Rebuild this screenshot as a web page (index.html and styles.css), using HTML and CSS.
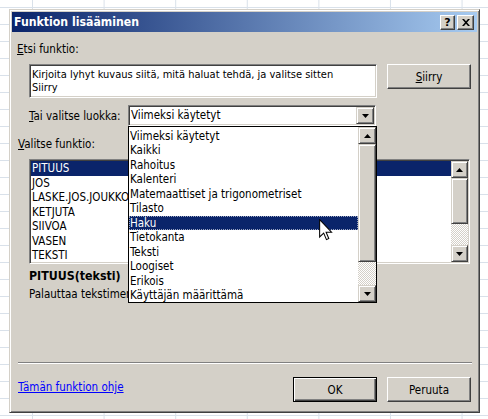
FILE: index.html
```html
<!DOCTYPE html>
<html lang="fi">
<head>
<meta charset="utf-8">
<title>Funktion lisääminen</title>
<link rel="stylesheet" href="styles.css">
</head>
<body>
<div class="dialog">
  <div class="titlebar">
    <span class="title">Funktion lisääminen</span>
    <span class="tbtn help">?</span>
    <span class="tbtn close"><svg width="8" height="7" viewBox="0 0 8 7"><path d="M0 0h2l2 2.2 2-2.2h2l-3 3.5 3 3.5h-2l-2-2.2-2 2.2h-2l3-3.5z" fill="#000"/></svg></span>
  </div>
  <div class="content">
    <div class="lbl lbl-etsi"><u>E</u>tsi funktio:</div>
    <div class="search-row">
      <div class="sunken textarea">Kirjoita lyhyt kuvaus siitä, mitä haluat tehdä, ja valitse sitten<br>Siirry</div>
      <button class="btn siirry"><u>S</u>iirry</button>
    </div>
    <div class="cat-row">
      <span class="lbl"><u>T</u>ai valitse luokka:</span>
      <div class="sunken combo">
        <div class="combo-field">Viimeksi käytetyt</div>
        <div class="sbtn combo-arrow"><svg width="7" height="4" viewBox="0 0 7 4"><path d="M0 0h7l-3.5 4z" fill="#000"/></svg></div>
        <div class="popup">
          <div class="pitems">
            <div class="item">Viimeksi käytetyt</div>
            <div class="item">Kaikki</div>
            <div class="item">Rahoitus</div>
            <div class="item">Kalenteri</div>
            <div class="item">Matemaattiset ja trigonometriset</div>
            <div class="item">Tilasto</div>
            <div class="item sel focus">Haku</div>
            <div class="item">Tietokanta</div>
            <div class="item">Teksti</div>
            <div class="item">Loogiset</div>
            <div class="item">Erikois</div>
            <div class="item">Käyttäjän määrittämä</div>
          </div>
          <div class="vscroll pscroll">
            <div class="sbtn"><svg width="7" height="4" viewBox="0 0 7 4"><path d="M3.5 0l3.5 4h-7z" fill="#000"/></svg></div>
            <div class="thumb pthumb"></div>
            <div class="track"></div>
            <div class="sbtn"><svg width="7" height="4" viewBox="0 0 7 4"><path d="M0 0h7l-3.5 4z" fill="#000"/></svg></div>
          </div>
        </div>
      </div>
    </div>
    <div class="lbl lbl-valitse"><u>V</u>alitse funktio:</div>
    <div class="sunken listbox">
      <div class="fitems">
        <div class="item sel">PITUUS</div>
        <div class="item">JOS</div>
        <div class="item">LASKE.JOS.JOUKKO</div>
        <div class="item">KETJUTA</div>
        <div class="item">SIIVOA</div>
        <div class="item">VASEN</div>
        <div class="item">TEKSTI</div>
      </div>
      <div class="vscroll">
        <div class="sbtn"><svg width="7" height="4" viewBox="0 0 7 4"><path d="M3.5 0l3.5 4h-7z" fill="#000"/></svg></div>
        <div class="thumb fthumb"></div>
        <div class="track"></div>
        <div class="sbtn"><svg width="7" height="4" viewBox="0 0 7 4"><path d="M0 0h7l-3.5 4z" fill="#000"/></svg></div>
      </div>
    </div>
    <div class="sig">PITUUS(teksti)</div>
    <div class="desc">Palauttaa tekstimerkkijonon merkkien määrän.</div>
    <div class="sep"></div>
    <div class="footer">
      <a class="help-link" href="#">Tämän funktion ohje</a>
      <button class="btn default">OK</button>
      <button class="btn cancel">Peruuta</button>
    </div>
  </div>
</div>
<svg class="cursor" width="14" height="22" viewBox="0 0 12 19"><path d="M0.5 0.5V15.5L4 12.2L6.4 17.8L8.4 16.9L6.1 11.4H10.8Z" fill="#fff" stroke="#000" stroke-width="0.9" stroke-linejoin="miter"/></svg>
</body>
</html>
```

FILE: styles.css
```css
* { box-sizing: border-box; }

body {
  margin: 0;
  width: 488px;
  height: 419px;
  overflow: hidden;
  position: relative;
  background-color: #fff;
  background-image:
    linear-gradient(to right, #d9e1ea 1px, transparent 1px),
    linear-gradient(to bottom, #d9e1ea 1px, transparent 1px);
  background-size: 71.6px 100%, 100% 17px;
  background-position: 32px 0, 0 7px;
  font: 11.5px "DejaVu Sans Condensed", "DejaVu Sans", sans-serif;
  color: #000;
}

.dialog {
  margin: 9px 0 0 9px;
  width: 471px;
  height: 404px;
  border: 1px solid;
  border-color: #d4d0c8 #404040 #404040 #d4d0c8;
  box-shadow: inset 1px 1px #fff, inset -1px -1px #808080;
  background: #d4d0c8;
  padding: 2px;
  display: flex;
  flex-direction: column;
}

.titlebar {
  height: 20px;
  flex: none;
  background: linear-gradient(to right, #0a246a, #a6caf0);
  display: flex;
  align-items: center;
  padding: 0 3px 0 2px;
}

.title {
  flex: 1;
  color: #fff;
  font-weight: bold;
  font-size: 12.2px;
}

.tbtn {
  height: 15px;
  background: #d4d0c8;
  border: 1px solid;
  border-color: #fff #404040 #404040 #fff;
  box-shadow: inset -1px -1px #808080;
  display: flex;
  align-items: center;
  justify-content: center;
}

.help {
  width: 15px;
  font: bold 11px "DejaVu Sans", sans-serif;
  line-height: 13px;
}

.close {
  width: 17px;
  margin-left: 2px;
}

.content {
  flex: 1;
  display: flex;
  flex-direction: column;
  padding: 0 6px 8px 5px;
}

.lbl { line-height: 14px; white-space: nowrap; }

.lbl-etsi { margin-top: 10px; }

.sunken {
  background: #fff;
  border: 1px solid;
  border-color: #808080 #fff #fff #808080;
  box-shadow: inset 1px 1px #404040, inset -1px -1px #d4d0c8;
  padding: 1px;
}

.search-row {
  margin-top: 8px;
  padding-left: 12px;
  display: flex;
  align-items: flex-start;
}

.textarea {
  width: 348px;
  height: 34px;
  padding: 3px 2px;
  font-size: 11px;
  line-height: 13px;
  white-space: nowrap;
  overflow: hidden;
}

.btn {
  font: inherit;
  color: #000;
  background: #d4d0c8;
  border: 1px solid;
  border-color: #fff #404040 #404040 #fff;
  box-shadow: inset -1px -1px #808080;
  padding: 0;
  width: 84px;
  height: 25px;
}

.siirry { margin-left: 10px; }

.cat-row {
  margin-top: 7px;
  height: 21px;
  padding-left: 12px;
  display: grid;
  grid-template-columns: 99px 248px;
  align-items: center;
}

.combo {
  position: relative;
  height: 21px;
  display: flex;
}

.combo-field {
  flex: 1;
  padding-left: 1px;
  line-height: 17px;
  white-space: nowrap;
}

.sbtn {
  flex: none;
  height: 17px;
  background: #d4d0c8;
  border: 1px solid;
  border-color: #d4d0c8 #404040 #404040 #d4d0c8;
  box-shadow: inset 1px 1px #fff, inset -1px -1px #808080;
  display: flex;
  align-items: center;
  justify-content: center;
}

.combo-arrow { width: 18px; }

.popup {
  position: absolute;
  left: -1px;
  top: 20px;
  width: 249px;
  height: 177px;
  background: #fff;
  border: 1px solid #000;
  display: flex;
  z-index: 2;
}

.pitems {
  flex: 1;
  padding-top: 1.5px;
  overflow: hidden;
}

.item {
  height: 14.5px;
  line-height: 14.5px;
  padding-left: 1px;
  white-space: nowrap;
}

.sel {
  background: #0a246a;
  color: #fff;
}

.focus {
  outline: 1px dotted #9aa4c0;
  outline-offset: -1px;
}

.vscroll {
  flex: none;
  width: 17px;
  display: flex;
  flex-direction: column;
}

.pscroll { width: 18px; }

.thumb {
  flex: none;
  background: #d4d0c8;
  border: 1px solid;
  border-color: #d4d0c8 #404040 #404040 #d4d0c8;
  box-shadow: inset 1px 1px #fff, inset -1px -1px #808080;
}

.pthumb { height: 118px; }
.fthumb { height: 46px; }

.track {
  flex: 1;
  background-color: #d4d0c8;
  background-image: repeating-conic-gradient(#fff 0 25%, #d4d0c8 0 50%);
  background-size: 2px 2px;
}

.lbl-valitse {
  margin-top: 11px;
  padding-left: 1px;
}

.listbox {
  margin-top: 8px;
  margin-left: 12px;
  width: 441px;
  height: 105px;
  display: flex;
}

.fitems {
  flex: 1;
  overflow: hidden;
}

.sig {
  margin-top: 5px;
  padding-left: 12px;
  line-height: 14px;
  font-weight: bold;
  font-size: 12.3px;
}

.desc {
  margin-top: 4px;
  padding-left: 12px;
  line-height: 14px;
  white-space: nowrap;
}

.sep {
  margin-top: 61px;
  margin-left: 1px;
  width: 454px;
  height: 2px;
  border-top: 1px solid #808080;
  border-bottom: 1px solid #fff;
}

.footer {
  margin-top: 13px;
  height: 25px;
  display: flex;
  padding-left: 1px;
}

.help-link {
  flex: 1;
  padding-top: 3px;
  line-height: 14px;
  color: #0000ff;
  text-decoration: underline;
}

.default {
  border-color: #000;
  box-shadow: inset 1px 1px #fff, inset -1px -1px #404040, inset -2px -2px #808080;
}

.cancel { margin-left: 10px; }

.cursor {
  position: absolute;
  left: 319px;
  top: 219px;
  z-index: 5;
}
```
